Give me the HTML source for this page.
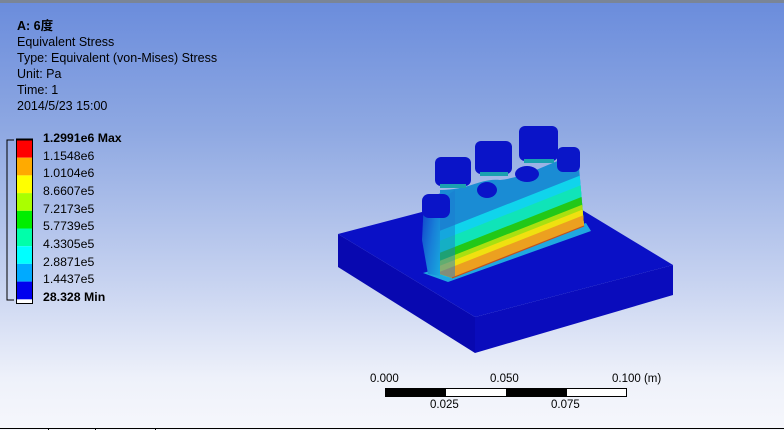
<!DOCTYPE html>
<html><head><meta charset="utf-8"><style>
html,body{margin:0;padding:0}
body{width:784px;height:430px;position:relative;overflow:hidden;font-family:"Liberation Sans","Noto Sans CJK SC",sans-serif;font-size:12.5px;color:#000;
background:linear-gradient(to bottom,#6a8cdc 0%,#8ea8e2 30%,#c6d2f0 65%,#eef1fa 88%,#f6f7fc 100%)}
.topbar{position:absolute;left:0;top:0;width:784px;height:3px;background:#7a8596}
.hd{position:absolute;left:17px;line-height:16px}
.lb{position:absolute;left:43px;line-height:14px;font-size:12.3px}
.sc{position:absolute;font-size:11.5px}
</style></head><body>
<div class="topbar"></div>
<div class="hd" style="top:18px"><b>A: 6度</b><br>Equivalent Stress<br>Type: Equivalent (von-Mises) Stress<br>Unit: Pa<br>Time: 1<br>2014/5/23 15:00</div>

<svg style="position:absolute;left:0;top:0" width="784" height="430">
<path d="M14 140H7V300H14" fill="none" stroke="#000" stroke-width="1"/>
<rect x="16.5" y="139.5" width="16" height="164" fill="#fff" stroke="#000"/>
<rect x="17" y="140" width="15" height="17.7" fill="#ff0000"/>
<rect x="17" y="157.7" width="15" height="17.7" fill="#ffaa00"/>
<rect x="17" y="175.4" width="15" height="17.7" fill="#ffff00"/>
<rect x="17" y="193.1" width="15" height="17.7" fill="#aaff00"/>
<rect x="17" y="210.8" width="15" height="17.7" fill="#00ee00"/>
<rect x="17" y="228.5" width="15" height="17.7" fill="#00ffaa"/>
<rect x="17" y="246.2" width="15" height="17.7" fill="#00ffff"/>
<rect x="17" y="263.9" width="15" height="17.7" fill="#00aaff"/>
<rect x="17" y="281.6" width="15" height="17.7" fill="#0000ee"/>
<line x1="16" y1="139.5" x2="33" y2="139.5" stroke="#000" stroke-width="2"/>

<defs>
<clipPath id="fc"><path d="M440,190 C470,190 480,178 500,180 C520,178 540,168 560,160 L578,155 L584,226 L452,278 L440,274 Z"/></clipPath>
<linearGradient id="le" x1="0" y1="0" x2="1" y2="0.5">
<stop offset="0" stop-color="#1038c8"/>
<stop offset="0.5" stop-color="#1880d8"/>
<stop offset="1" stop-color="#18b8e0"/>
</linearGradient>
</defs>
<polygon points="338,234 475,317 475,353 338,267" fill="#0808b0"/>
<polygon points="475,317 673,265 673,295 475,353" fill="#0a0cbc"/>
<polygon points="338,234 536,182 673,265 475,317" fill="#0a10c6"/>
<polygon points="423,273 448,282 591,231 586,223 440,268" fill="#20a8e0"/>
<polygon points="424,200 448,190 452,278 428,274 422,240" fill="url(#le)"/>
<g clip-path="url(#fc)">
<rect x="400" y="100" width="220" height="200" fill="#1a8cd4"/>
<polygon points="420,238.6 600,167.7 600,260 420,330" fill="#10d4ec"/>
<polygon points="420,248.6 600,177.7 600,260 420,330" fill="#10e4b8"/>
<polygon points="420,260.6 600,189.7 600,260 420,330" fill="#22c818"/>
<polygon points="420,268.6 600,197.7 600,260 420,330" fill="#a8e010"/>
<polygon points="420,273.6 600,202.7 600,260 420,330" fill="#f0e010"/>
<polygon points="420,279.6 600,208.7 600,260 420,330" fill="#eca020"/>
<polygon points="400,230 455,190 455,290 400,290" fill="#1a7ad0" opacity="0.5"/>
</g>
<path d="M452,278 L584,226" stroke="#c05020" stroke-width="1.2"/>
<rect x="422" y="194" width="28" height="24" rx="7" fill="#0a14c8"/>
<rect x="435" y="157" width="36" height="29" rx="6" fill="#0a14c8"/>
<rect x="475" y="141" width="37" height="33" rx="6" fill="#0a14c8"/>
<rect x="519" y="126" width="39" height="35" rx="6" fill="#0a14c8"/>
<rect x="557" y="147" width="23" height="25" rx="6" fill="#0a16c8"/>
<ellipse cx="487" cy="190" rx="10" ry="8" fill="#0a14c8"/>
<ellipse cx="527" cy="174" rx="12" ry="8" fill="#0a14c8"/>
<rect x="440" y="184" width="26" height="4" fill="#1aa0b0"/>
<rect x="480" y="172" width="28" height="4" fill="#1aa0b0"/>
<rect x="524" y="159" width="30" height="4" fill="#1aa0b0"/>
<rect x="385.5" y="388.5" width="241" height="8" fill="#fff" stroke="#000"/>
<rect x="386" y="389" width="60" height="7" fill="#000"/>
<rect x="506" y="389" width="61" height="7" fill="#000"/>
<line x1="0" y1="428.5" x2="784" y2="428.5" stroke="#000"/>
<line x1="48.5" y1="428" x2="48.5" y2="430" stroke="#000"/>
<line x1="95.5" y1="428" x2="95.5" y2="430" stroke="#000"/>
<line x1="155.5" y1="428" x2="155.5" y2="430" stroke="#000"/>
</svg>

<div class="lb" style="top:131px"><b>1.2991e6 Max</b></div>
<div class="lb" style="top:149px">1.1548e6</div>
<div class="lb" style="top:166px">1.0104e6</div>
<div class="lb" style="top:184px">8.6607e5</div>
<div class="lb" style="top:202px">7.2173e5</div>
<div class="lb" style="top:219px">5.7739e5</div>
<div class="lb" style="top:237px">4.3305e5</div>
<div class="lb" style="top:255px">2.8871e5</div>
<div class="lb" style="top:272px">1.4437e5</div>
<div class="lb" style="top:290px"><b>28.328 Min</b></div>

<div class="sc" style="left:370px;top:373px">0.000</div>
<div class="sc" style="left:490px;top:373px">0.050</div>
<div class="sc" style="left:612px;top:373px">0.100 (m)</div>
<div class="sc" style="left:430px;top:399px">0.025</div>
<div class="sc" style="left:551px;top:399px">0.075</div>
</body></html>
